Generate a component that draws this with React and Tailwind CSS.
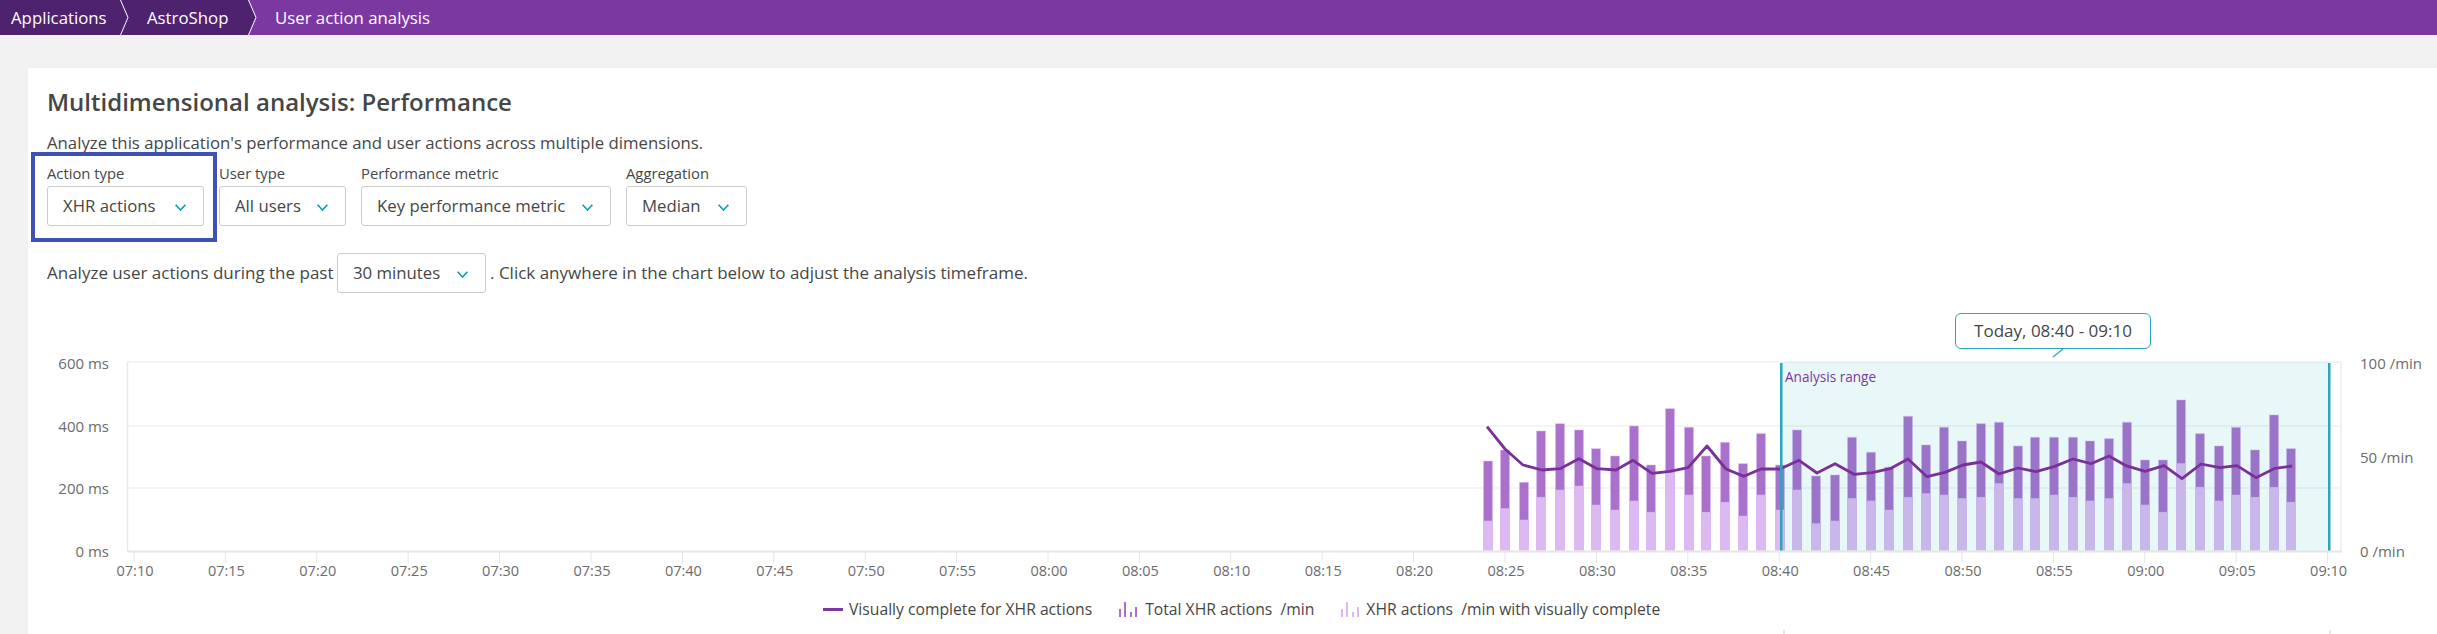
// Multidimensional analysis page with the XHR actions chart
import React from 'react';

const font = { fontFamily: '"Open Sans", sans-serif' };

const bars = [
  [1483, 483, 663], [1500, 450, 626], [1519, 547, 660], [1536, 393, 592], [1555, 371, 570],
  [1574, 390, 558], [1591, 446, 615], [1610, 468, 630], [1629, 378, 603], [1646, 495, 637],
  [1665, 326, 517], [1684, 382, 585], [1701, 468, 637], [1720, 427, 607], [1738, 491, 648],
  [1756, 401, 585], [1775, 495, 630], [1792, 390, 570], [1811, 528, 671], [1830, 525, 663],
  [1847, 412, 596], [1866, 457, 603], [1884, 502, 630], [1903, 349, 592], [1921, 435, 581],
  [1939, 382, 585], [1957, 423, 596], [1976, 371, 592], [1994, 367, 551], [2013, 438, 596],
  [2030, 412, 596], [2049, 412, 585], [2068, 412, 592], [2085, 423, 603], [2104, 416, 596],
  [2122, 367, 551], [2140, 480, 615], [2158, 480, 637], [2176, 300, 491], [2195, 401, 562],
  [2214, 438, 603], [2231, 382, 585], [2250, 450, 592], [2269, 345, 562], [2286, 446, 607],
];

const line = [
  [1487, 380], [1505, 447], [1523, 495], [1542, 510], [1560, 506], [1579, 476], [1597, 506],
  [1616, 510], [1633, 481], [1652, 520], [1670, 514], [1688, 503], [1707, 438], [1726, 507],
  [1744, 529], [1761, 507], [1780, 507], [1799, 481], [1817, 519], [1835, 491], [1854, 523],
  [1872, 518], [1890, 506], [1908, 477], [1927, 530], [1945, 517], [1963, 495], [1981, 486],
  [1999, 522], [2018, 504], [2036, 515], [2054, 500], [2073, 477], [2091, 491], [2109, 468],
  [2126, 497], [2145, 514], [2164, 497], [2182, 536], [2201, 492], [2220, 503], [2237, 497],
  [2256, 533], [2275, 505], [2292, 498],
];

const ticks = [];
for (let m = 0; m <= 24; m++) {
  const total = 7 * 60 + 10 + m * 5;
  const label = `${String(Math.floor(total / 60)).padStart(2, '0')}:${String(total % 60).padStart(2, '0')}`;
  ticks.push({ x: 134 + m * 91.4, label });
}

function Chevron() {
  return (
    <svg width="11" height="7" viewBox="0 0 11 7" fill="none" stroke="#00a1b2" strokeWidth="1.6" className="mt-[2px]">
      <path d="M0.6 0.8 L5.5 6 L10.4 0.8" />
    </svg>
  );
}

function Select({ value, width }) {
  return (
    <div className={`flex h-[40px] items-center justify-between rounded-[3px] border border-[#cccccc] bg-white pl-[15px] pr-[17px] text-[16.75px] text-[#454646] ${width}`}>
      <span>{value}</span>
      <Chevron />
    </div>
  );
}

function Filter({ label, value, width }) {
  return (
    <div>
      <div className="mb-[3px] h-[20px] text-[14.8px] leading-[20px] text-[#454646]">{label}</div>
      <Select value={value} width={width} />
    </div>
  );
}

function Chart() {
  const oy = 300;
  return (
    <svg width="2409" height="290" viewBox="28 300 2409 290" className="block" style={font}>
      {/* grid */}
      {[426, 488].map((y) => (
        <line key={y} x1="128" x2="2341" y1={y} y2={y} stroke="#f2f2f2" strokeWidth="1.5" />
      ))}
      <line x1="127" x2="2342" y1="362" y2="362" stroke="#f0f0f0" strokeWidth="1.5" />
      <line x1="127.5" x2="127.5" y1="362" y2="551" stroke="#e8e8e8" strokeWidth="1.5" />
      <line x1="2341" x2="2341" y1="362" y2="551" stroke="#eeeeee" strokeWidth="1.5" />

      {/* bars */}
      {bars.map(([x, top, split]) => (
        <g key={x}>
          <rect x={x} y={oy + split / 3} width="10" height={(752 - split) / 3} fill="#ddb9f1" />
          <rect x={x + 0.5} y={oy + top / 3} width="9" height={(split - top) / 3} fill="#a970cc" stroke="#ddb9f1" strokeOpacity="0.5" />
        </g>
      ))}

      {/* analysis range */}
      <rect x="1781" y="362" width="548" height="189" fill="#00a1b2" fillOpacity="0.09" />
      <polyline
        points={line.map(([x, v]) => `${x},${oy + v / 3}`).join(' ')}
        fill="none"
        stroke="#7a3099"
        strokeWidth="2.8"
        strokeLinejoin="round"
      />
      <rect x="1780" y="363" width="2.5" height="188" fill="#2ba5b8" />
      <rect x="2328" y="363" width="2.5" height="188" fill="#2ba5b8" />
      <text x="1785" y="382" fontSize="13.6" fill="#7c38a1">Analysis range</text>

      {/* axis */}
      <line x1="127" x2="2342" y1="551.5" y2="551.5" stroke="#e6e6e6" strokeWidth="2" />
      {ticks.map((t) => (
        <g key={t.label}>
          <line x1={t.x} x2={t.x} y1="552" y2="563" stroke="#e6e6e6" />
          <text x={t.x + 1} y="576" fontSize="14.5" fill="#6b6b6b" textAnchor="middle">{t.label}</text>
        </g>
      ))}
      {[['600 ms', 369], ['400 ms', 432], ['200 ms', 494], ['0 ms', 557]].map(([t, y]) => (
        <text key={t} x="109" y={y} fontSize="15" fill="#6b6b6b" textAnchor="end">{t}</text>
      ))}
      {[['100 /min', 369], ['50 /min', 463], ['0 /min', 557]].map(([t, y]) => (
        <text key={t} x="2360" y={y} fontSize="15" fill="#6b6b6b">{t}</text>
      ))}

      {/* tooltip tail */}
      <path d="M2063 349 L2053 357" stroke="#2ba5b8" strokeWidth="1.2" fill="none" />
    </svg>
  );
}

function LegendBars({ color }) {
  return (
    <svg width="18" height="15" viewBox="0 0 18 15" fill={color} className="block">
      <rect x="0" y="7" width="2" height="8" />
      <rect x="5" y="0" width="2" height="15" />
      <rect x="11" y="10" width="2" height="5" />
      <rect x="16" y="5" width="2" height="10" />
    </svg>
  );
}

export default function App() {
  return (
    <div className="h-[634px] w-[2437px] overflow-hidden bg-[#f2f2f2] text-[#454646]" style={font}>
      {/* Breadcrumb */}
      <div className="flex h-[35px] items-center bg-[#7c38a1] text-[16.8px] text-white">
        <div className="flex h-full w-[120px] items-center bg-[#4f2270] pl-[11px]">Applications</div>
        <svg width="10" height="35" viewBox="0 0 10 35" className="bg-[#4f2270]" fill="none" stroke="#ffffff" strokeWidth="1">
          <path d="M0.5 0 L8 17.5 L0.5 35" />
        </svg>
        <div className="flex h-full w-[118px] items-center bg-[#4f2270] pl-[17px]">AstroShop</div>
        <svg width="10" height="35" viewBox="0 0 10 35" fill="#4f2270" stroke="#ffffff" strokeWidth="1">
          <path d="M0.5 0 L8 17.5 L0.5 35 L-1 35 L-1 0 Z" />
        </svg>
        <div className="pl-[17px]">User action analysis</div>
      </div>

      {/* Card */}
      <div className="relative ml-[28px] mt-[33px] h-[566px] rounded-tl-[3px] bg-white pl-[19px] pt-[18px]">
        <h1 className="text-[24px] font-semibold leading-[32px] text-[#454646]">Multidimensional analysis: Performance</h1>
        <p className="mt-[13px] text-[16.75px] leading-[24px]">Analyze this application's performance and user actions across multiple dimensions.</p>

        <div className="mt-[8px] flex gap-[15px]">
          <Filter label="Action type" value="XHR actions" width="w-[157px]" />
          <Filter label="User type" value="All users" width="w-[127px]" />
          <Filter label="Performance metric" value="Key performance metric" width="w-[250px]" />
          <Filter label="Aggregation" value="Median" width="w-[121px]" />
        </div>

        <div className="mt-[27px] flex items-center text-[17px]">
          <span className="w-[290px] whitespace-nowrap">Analyze user actions during the past</span>
          <div className="mr-[4px]">
            <Select value="30 minutes" width="w-[149px]" />
          </div>
          <span>. Click anywhere in the chart below to adjust the analysis timeframe.</span>
        </div>

        {/* highlight around the first filter */}
        <div className="absolute left-[3px] top-[84px] h-[90px] w-[186px] border-[4px] border-[#3f51b5]" />

        <div className="-ml-[19px] mt-[7px]">
          <Chart />
        </div>

        <div className="absolute left-[1927px] top-[245px] flex h-[36px] w-[196px] items-center justify-center rounded-[6px] border border-[#2ba5b8] bg-white text-[17px]">
          Today, 08:40 - 09:10
        </div>

        {/* Legend */}
        <div className="ml-[776px] mt-[8px] flex items-center text-[15.7px] text-[#454646]">
          <span className="mr-[6px] h-[3px] w-[20px] bg-[#7c38a1]" />
          <span>Visually complete for XHR actions</span>
          <span className="ml-[27px] mr-[8px]"><LegendBars color="#a970cc" /></span>
          <span>Total XHR actions{'\u00a0'} /min</span>
          <span className="ml-[27px] mr-[7px]"><LegendBars color="#ddb9f1" /></span>
          <span>XHR actions{'\u00a0'} /min with visually complete</span>
        </div>

        {/* top of the next chart's range markers */}
        <span className="absolute bottom-0 left-[1755px] h-[4px] w-[2px] bg-[#e6e6e6]" />
        <span className="absolute bottom-0 left-[2301px] h-[4px] w-[2px] bg-[#e6e6e6]" />
      </div>
    </div>
  );
}
